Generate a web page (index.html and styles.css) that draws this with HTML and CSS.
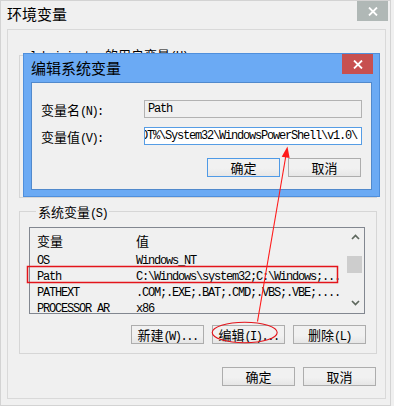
FILE: index.html
```html
<!DOCTYPE html>
<html lang="zh-CN">
<head>
<meta charset="utf-8">
<title>环境变量</title>
<link rel="stylesheet" href="styles.css">
</head>
<body>
<div class="window">
  <div class="titlebar">
    <span class="title">环境变量</span>
    <span class="wclose">
      <svg width="10" height="9" viewBox="0 0 10 9"><path d="M1 0.5L9 8.5M9 0.5L1 8.5" stroke="#fff" stroke-width="1.8"/></svg>
    </span>
  </div>
  <div class="panel">
    <div class="group user">
      <div class="legend"><span class="m">lvbainingtao</span> 的用户变量<span class="m">(U)</span></div>
    </div>
    <div class="group sys">
      <div class="legend">系统变量<span class="m">(S)</span></div>
      <div class="list">
        <div class="rows">
          <div class="lhead"><span class="c1">变量</span><span>值</span></div>
          <div class="row"><span class="c1">OS</span><span>Windows_NT</span></div>
          <div class="row"><span class="c1">Path</span><span>C:\Windows\system32;C:\Windows;...</span></div>
          <div class="row"><span class="c1">PATHEXT</span><span>.COM;.EXE;.BAT;.CMD;.VBS;.VBE;....</span></div>
          <div class="row"><span class="c1">PROCESSOR_AR</span><span>x86</span></div>
        </div>
        <div class="scroll">
          <svg class="sup" width="9" height="6" viewBox="0 0 9 6"><polyline points="1,5 4.5,1.5 8,5" fill="none" stroke="#5d675d" stroke-width="1.7"/></svg>
          <div class="thumb"></div>
          <svg class="sdown" width="9" height="6" viewBox="0 0 9 6"><polyline points="1,1 4.5,4.5 8,1" fill="none" stroke="#5d675d" stroke-width="1.7"/></svg>
        </div>
      </div>
      <div class="btnrow sysbtns">
        <div class="btn">新建<span class="m">(W)...</span></div>
        <div class="btn">编辑<span class="m">(I)...</span></div>
        <div class="btn">删除<span class="m">(L)</span></div>
      </div>
    </div>
    <div class="btnrow bottom">
      <div class="btn">确定</div>
      <div class="btn">取消</div>
    </div>
  </div>
</div>

<div class="dialog">
  <div class="dtitlebar">
    <span class="dtitle">编辑系统变量</span>
    <span class="dclose">
      <svg width="10" height="9" viewBox="0 0 10 9"><path d="M1 0.5L9 8.5M9 0.5L1 8.5" stroke="#fff" stroke-width="1.8"/></svg>
    </span>
  </div>
  <div class="client">
    <div class="field">
      <span class="flabel">变量名<span class="m">(N):</span></span>
      <div class="finput name"><span class="mono">Path</span></div>
    </div>
    <div class="field second">
      <span class="flabel">变量值<span class="m">(V):</span></span>
      <div class="finput value"><span class="mono">%SystemRoot%\system32;%SYSTEMROOT%\System32\WindowsPowerShell\v1.0\</span></div>
    </div>
    <div class="btnrow dbtns">
      <div class="btn default">确定</div>
      <div class="btn">取消</div>
    </div>
  </div>
</div>

<svg class="annot" width="394" height="406" viewBox="0 0 394 406">
  <rect x="27.5" y="266.5" width="310" height="16" fill="none" stroke="#e3141b" stroke-width="1.5"/>
  <ellipse cx="244.7" cy="332.5" rx="32.5" ry="10.3" fill="none" stroke="#e3141b" stroke-width="1.1"/>
  <line x1="257.5" y1="321.5" x2="286" y2="155" stroke="#ff1a1a" stroke-width="1.1"/>
  <polygon points="287.5,146.5 289.6,158 281.7,156.7" fill="#ff1a1a"/>
</svg>
</body>
</html>
```
FILE: styles.css
```css
* { box-sizing: border-box; }
html, body { margin: 0; padding: 0; }
body {
  width: 394px;
  height: 406px;
  overflow: hidden;
  background: #f0f0f0;
  font-family: "Noto Sans CJK SC", sans-serif;
  color: #000;
}
.m {
  font-family: "Liberation Mono", monospace;
  font-size: 12px;
  letter-spacing: -1.5px;
}
.mono {
  font-family: "Liberation Mono", monospace;
  font-size: 12px;
  letter-spacing: -1.2px;
  white-space: nowrap;
}

/* outer window */
.window {
  width: 391px;
  height: 406px;
  border: 1px solid #d3d3d3;
  background: #f0f0f0;
}
.titlebar {
  display: flex;
  align-items: flex-start;
  height: 28px;
}
.title {
  margin: 2px 0 0 6px;
  font-size: 15px;
  line-height: 21px;
}
.wclose {
  margin-left: auto;
  margin-right: 2px;
  width: 31px;
  height: 20px;
  background: #b0b8b6;
  display: flex;
  align-items: center;
  justify-content: center;
}

.panel {
  margin: 0 4px 0 6px;
  height: 370px;
  border: 1px solid #d9d9d9;
  padding: 25px 8px 0 11px;
}
.group {
  border: 1px solid #d6d6d6;
  width: 358px;
  height: 143px;
}
.legend {
  display: table;
  margin: -8px 0 0 7px;
  padding: 0 2px;
  background: #f0f0f0;
  font-size: 13px;
  line-height: 15px;
  white-space: nowrap;
}
.user .legend { margin-left: 8px; margin-top: -9px; }
.user .legend .m { letter-spacing: -1.2px; }
.sys {
  margin-top: 13px;
  padding: 0 9px;
}

/* list view */
.list {
  display: flex;
  margin-top: 5px;
  width: 336px;
  height: 87px;
  border: 1px solid #828790;
  background: #f0f0f0;
  overflow: hidden;
}
.rows { flex: 1; min-width: 0; }
.lhead {
  display: flex;
  align-items: center;
  height: 25px;
  padding-left: 7px;
  font-size: 13px;
}
.row {
  display: flex;
  align-items: center;
  height: 16px;
  padding-left: 7px;
  font-family: "Liberation Mono", monospace;
  font-size: 12px;
  letter-spacing: -1.2px;
  white-space: nowrap;
}
.c1 { width: 99px; flex: none; }
.scroll {
  width: 17px;
  flex: none;
  display: flex;
  flex-direction: column;
  align-items: center;
}
.sup { margin-top: 6px; }
.thumb {
  align-self: flex-start;
  margin-top: 16px;
  width: 15px;
  height: 17px;
  background: #cdcdcd;
}
.sdown { margin-top: 27px; }

/* buttons */
.btnrow {
  display: flex;
  justify-content: flex-end;
  gap: 8px;
}
.btn {
  width: 73px;
  height: 19px;
  border: 1px solid #adadad;
  background: linear-gradient(#f1f1f1, #f1f1f1 55%, #e6e6e6);
  font-size: 13px;
  line-height: 17px;
  text-align: center;
  white-space: nowrap;
}
.btn.default { border-color: #4f9ae6; }
.sysbtns { margin-top: 11px; margin-right: 1px; }
.bottom { margin-top: 13px; margin-right: 1px; }

/* edit dialog (modal over the window) */
.dialog {
  position: absolute;
  left: 23px;
  top: 53px;
  width: 357px;
  height: 144px;
  background: #6baaf4;
  border: 1px solid #4f8fdc;
  display: flex;
  flex-direction: column;
}
.dtitlebar {
  display: flex;
  align-items: flex-start;
  height: 28px;
  flex: none;
}
.dtitle {
  margin: 3px 0 0 7px;
  font-size: 15px;
  line-height: 21px;
}
.dclose {
  margin-left: auto;
  margin-right: 6px;
  width: 31px;
  height: 20px;
  background: #c75050;
  display: flex;
  align-items: center;
  justify-content: center;
}
.client {
  margin: 0 7px 0 7px;
  width: 341px;
  height: 108px;
  background: #f0f0f0;
  border: 1px solid #5189cc;
  padding: 17px 0 0 9px;
}
.field {
  display: flex;
  align-items: center;
  height: 18px;
}
.field.second { margin-top: 9px; }
.flabel {
  width: 103px;
  flex: none;
  font-size: 13px;
  white-space: nowrap;
}
.finput {
  width: 218px;
  height: 18px;
  flex: none;
  border: 1px solid #b2b2b2;
  display: flex;
  align-items: center;
  overflow: hidden;
  padding-left: 3px;
}
.finput.value {
  border-color: #569de5;
  background: #ffffff;
  justify-content: flex-end;
  padding: 0 4px 0 0;
}
.finput.value .mono { flex: none; }
.dbtns { margin-top: 13px; margin-right: 10px; }

/* annotations drawn over the screenshot */
.annot {
  position: absolute;
  left: 0;
  top: 0;
  pointer-events: none;
}
```
